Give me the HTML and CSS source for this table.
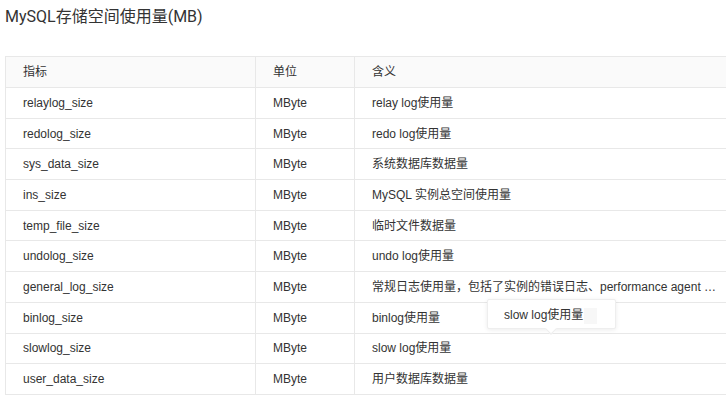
FILE: index.html
```html
<!DOCTYPE html>
<html>
<head>
<meta charset="utf-8">
<link rel="stylesheet" href="styles.css">
</head>
<body>
<div class="page">
  <h3 class="title">MySQL存储空间使用量(MB)</h3>
  <div class="table-wrap">
    <table class="metrics">
      <colgroup>
        <col class="c1"><col class="c2"><col class="c3">
      </colgroup>
      <thead>
        <tr><th>指标</th><th>单位</th><th>含义</th></tr>
      </thead>
      <tbody>
        <tr><td>relaylog_size</td><td>MByte</td><td>relay log使用量</td></tr>
        <tr><td>redolog_size</td><td>MByte</td><td>redo log使用量</td></tr>
        <tr><td>sys_data_size</td><td>MByte</td><td>系统数据库数据量</td></tr>
        <tr><td>ins_size</td><td>MByte</td><td>MySQL 实例总空间使用量</td></tr>
        <tr><td>temp_file_size</td><td>MByte</td><td>临时文件数据量</td></tr>
        <tr><td>undolog_size</td><td>MByte</td><td>undo log使用量</td></tr>
        <tr><td>general_log_size</td><td>MByte</td><td>常规日志使用量，包括了实例的错误日志、performance agent …</td></tr>
        <tr><td>binlog_size</td><td>MByte</td><td class="tip-cell">binlog使用量
          <div class="tooltip">slow log使用量<span class="caret-mark"></span></div>
        </td></tr>
        <tr><td>slowlog_size</td><td>MByte</td><td>slow log使用量</td></tr>
        <tr><td>user_data_size</td><td>MByte</td><td>用户数据库数据量</td></tr>
      </tbody>
    </table>
  </div>
</div>
</body>
</html>
```

FILE: styles.css
```css
html, body {
  margin: 0;
  padding: 0;
  background: #fff;
  overflow: hidden;
}
body {
  font-family: "Liberation Sans", "Noto Sans CJK SC", sans-serif;
  color: #333;
  font-size: 12px;
}
.page {
  padding: 0 0 0 5px;
}
.title {
  margin: 0;
  padding-top: 6px;
  height: 56px;
  box-sizing: border-box;
  font-family: Roboto, "Noto Sans CJK SC", sans-serif;
  font-size: 16px;
  font-weight: normal;
  line-height: 22px;
  color: #333;
}
.metrics {
  border-collapse: collapse;
  width: 722px;
  table-layout: fixed;
}
.c1 { width: 250px; }
.c2 { width: 99px; }
.c3 { width: 373px; }
.metrics th, .metrics td {
  border: 1px solid #e8e8e8;
  padding: 0 17px;
  height: 29.7px;
  text-align: left;
  font-weight: normal;
  color: #333;
  line-height: 18px;
  white-space: nowrap;
  overflow: visible;
}
.metrics th:last-child, .metrics td:last-child {
  padding-right: 0;
}
.metrics th {
  background: #fafafa;
  height: 30px;
}
.tip-cell {
  position: relative;
}
.tooltip {
  position: absolute;
  left: 132px;
  top: -4px;
  width: 129px;
  height: 30px;
  box-sizing: border-box;
  padding-left: 16px;
  line-height: 30px;
  background: #fff;
  border: 1px solid #eee;
  border-radius: 2px;
  box-shadow: 0 1px 4px rgba(0,0,0,0.08);
  color: #333;
  z-index: 2;
}
.tooltip::after {
  content: "";
  position: absolute;
  left: 59px;
  bottom: -5px;
  width: 7px;
  height: 7px;
  background: #fff;
  border-right: 1px solid #eee;
  border-bottom: 1px solid #eee;
  transform: rotate(45deg);
}
.caret-mark {
  display: inline-block;
  width: 13px;
  height: 16px;
  background: #f7f7f7;
  vertical-align: middle;
  margin-left: 1px;
}
```
